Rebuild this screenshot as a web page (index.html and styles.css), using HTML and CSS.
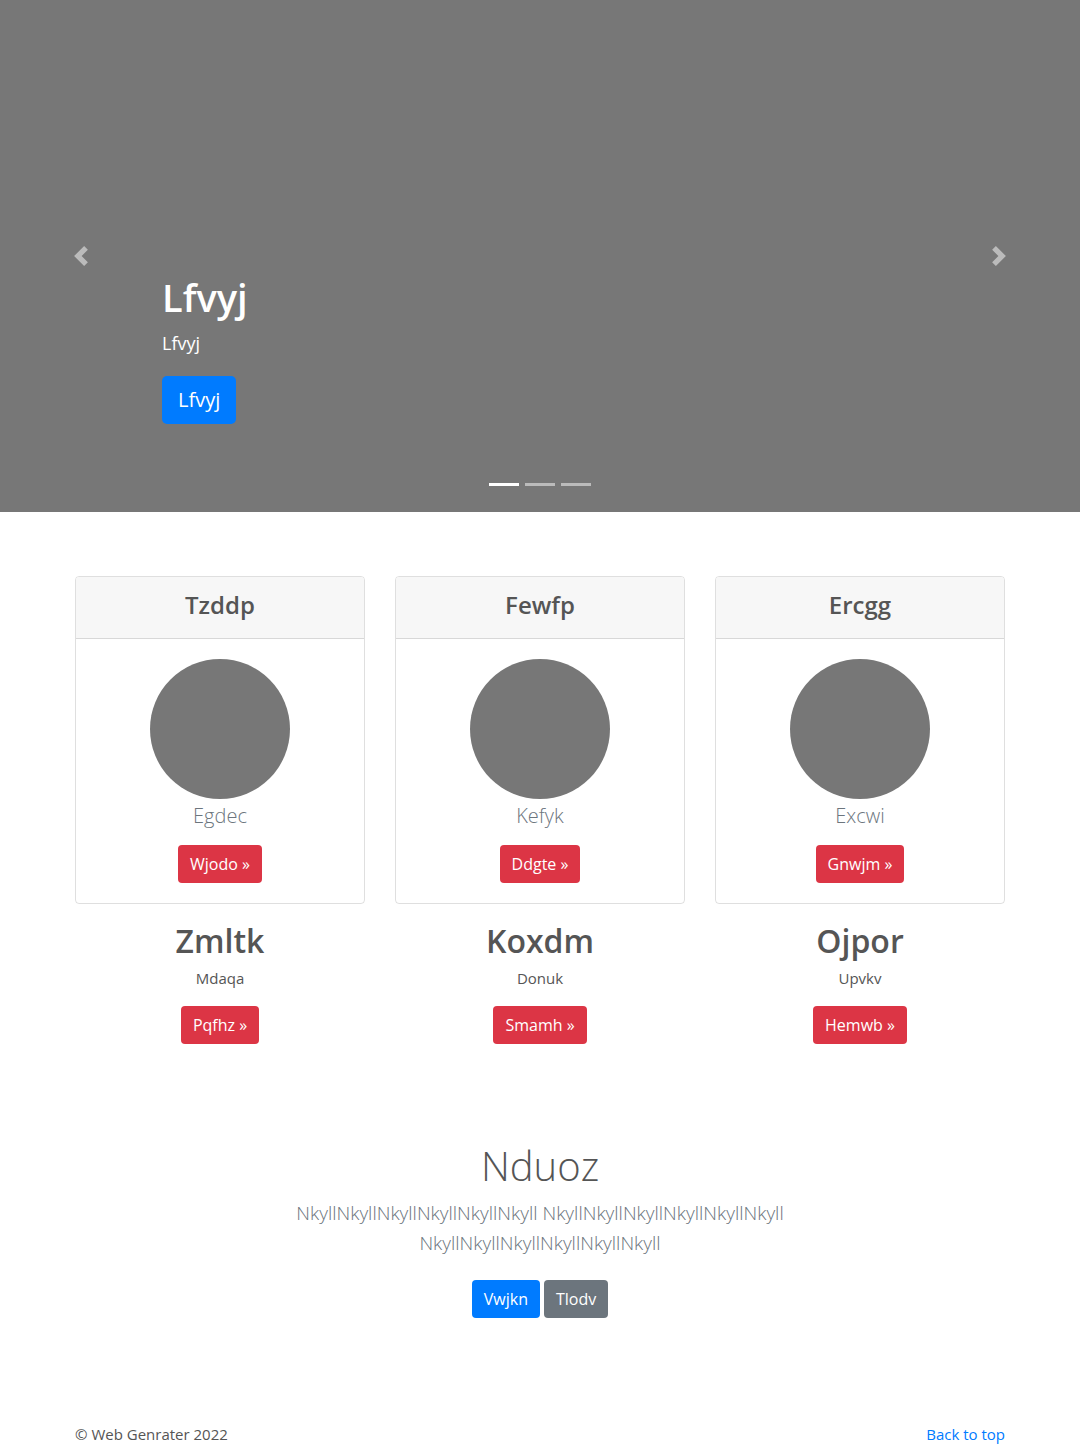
FILE: index.html
```html
<!DOCTYPE html>
<html lang="en">
<head>
<meta charset="utf-8">
<title>Carousel</title>
<link rel="stylesheet" href="styles.css">
</head>
<body>
<main>
  <div class="carousel">
    <div class="carousel-item">
      <div class="carousel-caption">
        <h1 class="caption-title">Lfvyj</h1>
        <p class="caption-text">Lfvyj</p>
        <a class="btn btn-lg btn-primary" href="#">Lfvyj</a>
      </div>
    </div>
    <a class="carousel-control control-prev" href="#">
      <svg class="control-icon" viewBox="0 0 8 8" width="20" height="20"><path fill="#fff" d="M5.25 0l-4 4 4 4 1.5-1.5L4.25 4l2.5-2.5L5.25 0z"/></svg>
    </a>
    <a class="carousel-control control-next" href="#">
      <svg class="control-icon" viewBox="0 0 8 8" width="20" height="20"><path fill="#fff" d="M2.75 0l-1.5 1.5L3.75 4l-2.5 2.5L2.75 8l4-4-4-4z"/></svg>
    </a>
    <ol class="indicators">
      <li class="indicator active"></li>
      <li class="indicator"></li>
      <li class="indicator"></li>
    </ol>
  </div>

  <div class="container">
    <div class="row">
      <div class="col">
        <div class="card">
          <div class="card-header"><h4 class="card-title">Tzddp</h4></div>
          <div class="card-body">
            <div class="circle"></div>
            <p class="card-lead">Egdec</p>
            <a class="btn btn-danger" href="#">Wjodo &raquo;</a>
          </div>
        </div>
        <h2 class="col-title">Zmltk</h2>
        <p class="col-text">Mdaqa</p>
        <a class="btn btn-danger" href="#">Pqfhz &raquo;</a>
      </div>
      <div class="col">
        <div class="card">
          <div class="card-header"><h4 class="card-title">Fewfp</h4></div>
          <div class="card-body">
            <div class="circle"></div>
            <p class="card-lead">Kefyk</p>
            <a class="btn btn-danger" href="#">Ddgte &raquo;</a>
          </div>
        </div>
        <h2 class="col-title">Koxdm</h2>
        <p class="col-text">Donuk</p>
        <a class="btn btn-danger" href="#">Smamh &raquo;</a>
      </div>
      <div class="col">
        <div class="card">
          <div class="card-header"><h4 class="card-title">Ercgg</h4></div>
          <div class="card-body">
            <div class="circle"></div>
            <p class="card-lead">Excwi</p>
            <a class="btn btn-danger" href="#">Gnwjm &raquo;</a>
          </div>
        </div>
        <h2 class="col-title">Ojpor</h2>
        <p class="col-text">Upvkv</p>
        <a class="btn btn-danger" href="#">Hemwb &raquo;</a>
      </div>
    </div>

    <section class="intro">
      <h1 class="intro-title">Nduoz</h1>
      <p class="intro-lead">NkyllNkyllNkyllNkyllNkyllNkyll NkyllNkyllNkyllNkyllNkyllNkyll NkyllNkyllNkyllNkyllNkyllNkyll</p>
      <div class="intro-actions">
        <a class="btn btn-primary" href="#">Vwjkn</a>
        <a class="btn btn-secondary" href="#">Tlodv</a>
      </div>
    </section>
  </div>

  <footer class="container footer">
    <p class="copy">&copy; Web Genrater 2022</p>
    <a class="back-top" href="#">Back to top</a>
  </footer>
</main>
</body>
</html>
```

FILE: styles.css
```css
* { box-sizing: border-box; }
html, body { margin: 0; padding: 0; }
body {
  font-family: "Open Sans", "Noto Sans", "Liberation Sans", sans-serif;
  font-size: 16px;
  line-height: 1.5;
  color: #555;
  background: #fff;
}
h1, h2, h4, p { margin: 0; }
a { text-decoration: none; }

.carousel {
  position: relative;
  height: 512px;
  background: #777;
  margin-bottom: 64px;
}
.carousel-item { height: 100%; }
.carousel-caption {
  position: absolute;
  left: 15%;
  right: 15%;
  bottom: 88px;
  color: #fff;
  display: flex;
  flex-direction: column;
  align-items: flex-start;
}
.caption-title {
  font-size: 38px;
  font-weight: 600;
  line-height: 1.2;
  margin-bottom: 9px;
}
.caption-text {
  font-size: 18px;
  line-height: 26px;
  margin-bottom: 20px;
}

.carousel-control {
  position: absolute;
  top: 0;
  bottom: 0;
  width: 15%;
  display: flex;
  align-items: center;
  justify-content: center;
  opacity: .5;
}
.control-prev { left: 0; }
.control-next { right: 0; }
.control-icon { display: block; }

.indicators {
  position: absolute;
  left: 0;
  right: 0;
  bottom: 26px;
  margin: 0;
  padding: 0;
  list-style: none;
  display: flex;
  justify-content: center;
  gap: 6px;
}
.indicator {
  width: 30px;
  height: 3px;
  background: #fff;
  opacity: .5;
}
.indicator.active { opacity: 1; }

.btn {
  display: inline-block;
  font-size: 16px;
  line-height: 24px;
  padding: 7px 12px;
  border-radius: 4px;
  color: #fff;
  white-space: nowrap;
}
.btn-lg {
  font-size: 20px;
  line-height: 30px;
  padding: 9px 16px;
  border-radius: 5px;
}
.btn-primary { background: #007bff; }
.btn-secondary { background: #6c757d; }
.btn-danger { background: #dc3545; }

.container {
  width: 960px;
  margin: 0 auto;
  padding: 0 15px;
}
.row {
  display: grid;
  grid-template-columns: repeat(3, 290px);
  column-gap: 30px;
}
.col {
  display: flex;
  flex-direction: column;
  align-items: center;
  text-align: center;
}
.card {
  width: 100%;
  border: 1px solid rgba(0,0,0,.125);
  border-radius: 4px;
  overflow: hidden;
}
.card-header {
  background: #f7f7f7;
  border-bottom: 1px solid rgba(0,0,0,.125);
  padding: 14px 20px 18px;
  height: 62px;
}
.card-title {
  font-size: 24px;
  font-weight: 600;
  line-height: 28px;
  color: #555;
}
.card-body {
  padding: 20px;
  display: flex;
  flex-direction: column;
  align-items: center;
}
.circle {
  width: 140px;
  height: 140px;
  border-radius: 50%;
  background: #777;
}
.card-lead {
  font-size: 20px;
  font-weight: 300;
  line-height: 30px;
  color: #6c757d;
  margin-top: 2px;
  margin-bottom: 14px;
}
.col-title {
  font-size: 32px;
  font-weight: 600;
  line-height: 38px;
  margin-top: 18px;
  margin-bottom: 6px;
}
.col-text {
  font-size: 15px;
  line-height: 24px;
  margin-bottom: 16px;
}

.intro {
  width: 610px;
  margin: 98px auto 0;
  text-align: center;
}
.intro-title {
  font-size: 40px;
  font-weight: 300;
  line-height: 48px;
  margin-bottom: 8px;
}
.intro-lead {
  font-size: 19px;
  font-weight: 300;
  line-height: 30px;
  color: #6c757d;
  margin-bottom: 22px;
}
.intro-actions {
  display: flex;
  justify-content: center;
  gap: 4px;
}

.footer {
  margin-top: 104px;
  display: flex;
  justify-content: space-between;
  align-items: center;
  font-size: 15px;
  line-height: 24px;
}
.back-top { color: #007bff; }
```
